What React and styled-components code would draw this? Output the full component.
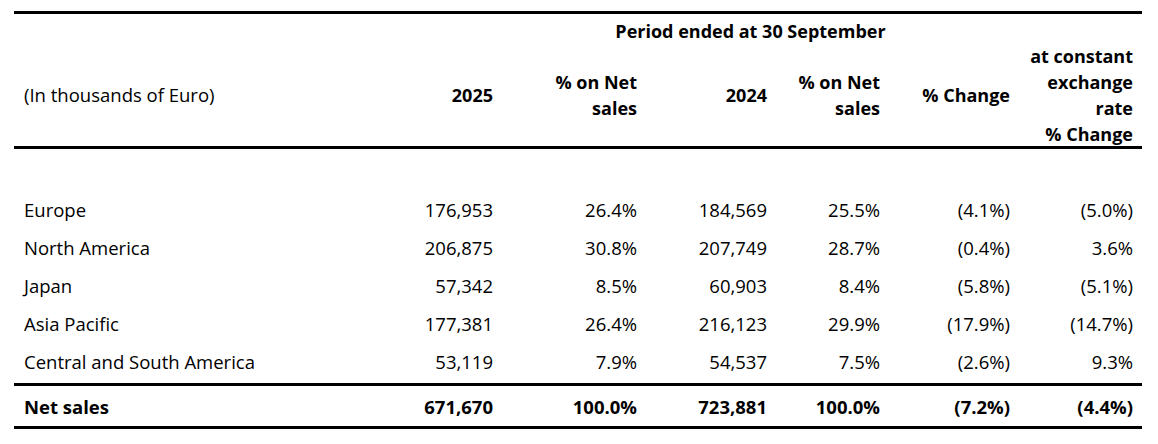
import React from 'react';
import styled, { createGlobalStyle } from 'styled-components';

const GlobalStyle = createGlobalStyle`
  html, body {
    margin: 0;
    padding: 0;
    background: #ffffff;
  }
  body {
    font-family: "Open Sans", "Liberation Sans", sans-serif;
    color: #000000;
  }
`;

const rows = [
  ['Europe', '176,953', '26.4%', '184,569', '25.5%', '(4.1%)', '(5.0%)'],
  ['North America', '206,875', '30.8%', '207,749', '28.7%', '(0.4%)', '3.6%'],
  ['Japan', '57,342', '8.5%', '60,903', '8.4%', '(5.8%)', '(5.1%)'],
  ['Asia Pacific', '177,381', '26.4%', '216,123', '29.9%', '(17.9%)', '(14.7%)'],
  ['Central and South America', '53,119', '7.9%', '54,537', '7.5%', '(2.6%)', '9.3%'],
];

const total = ['Net sales', '671,670', '100.0%', '723,881', '100.0%', '(7.2%)', '(4.4%)'];

function App() {
  return (
    <>
      <GlobalStyle />
      <Page>
        <Table>
          <Head>
            <PeriodCell>Period ended at 30 September</PeriodCell>
            <HeadLabel>(In thousands of Euro)</HeadLabel>
            <HeadCell>2025</HeadCell>
            <HeadCell>% on Net<br />sales</HeadCell>
            <HeadCell>2024</HeadCell>
            <HeadCell>% on Net<br />sales</HeadCell>
            <HeadCell>% Change</HeadCell>
            <HeadCell>at constant<br />exchange<br />rate<br />% Change</HeadCell>
          </Head>
          <Body>
            <Spacer />
            {rows.map((r) => (
              <Row key={r[0]}>
                {r.map((v, i) =>
                  i === 0 ? <Label key={i}>{v}</Label> : <Num key={i}>{v}</Num>
                )}
              </Row>
            ))}
          </Body>
          <Row $total>
            {total.map((v, i) =>
              i === 0 ? <Label key={i}>{v}</Label> : <Num key={i}>{v}</Num>
            )}
          </Row>
        </Table>
      </Page>
    </>
  );
}

export default App;

const cols = '366px 122px 144px 130px 113px 130px 123px';

const Page = styled.div`
  width: 1158px;
  height: 444px;
  padding: 11px 0 0 14px;
  box-sizing: border-box;
  font-size: 18.5px;
`;

const Table = styled.div`
  width: 1128px;
  border-top: 3px solid #000;
  border-bottom: 3px solid #000;
`;

const Head = styled.div`
  display: grid;
  grid-template-columns: ${cols};
  grid-template-rows: 30px 102px;
  border-bottom: 3px solid #000;
  font-weight: 700;
  line-height: 26px;
  font-size: 18px;
`;

const PeriodCell = styled.div`
  grid-column: 3 / 7;
  grid-row: 1;
  align-self: center;
  text-align: center;
  padding-top: 4px;
  padding-right: 20px;
`;

const HeadLabel = styled.div`
  grid-column: 1;
  grid-row: 2;
  align-self: center;
  padding-left: 10px;
  font-weight: 400;
  font-size: 18.5px;
`;

const HeadCell = styled.div`
  grid-row: 2;
  align-self: center;
  text-align: right;
  padding-right: 9px;
`;

const Body = styled.div`
  border-bottom: 3px solid #000;
  padding-bottom: 3px;
`;

const Spacer = styled.div`
  height: 41px;
`;

const Row = styled.div`
  display: grid;
  grid-template-columns: ${cols};
  height: ${(p) => (p.$total ? '40px' : '38px')};
  align-items: center;
  font-weight: ${(p) => (p.$total ? 700 : 400)};
`;

const Label = styled.div`
  padding-left: 10px;
`;

const Num = styled.div`
  text-align: right;
  padding-right: 9px;
`;
